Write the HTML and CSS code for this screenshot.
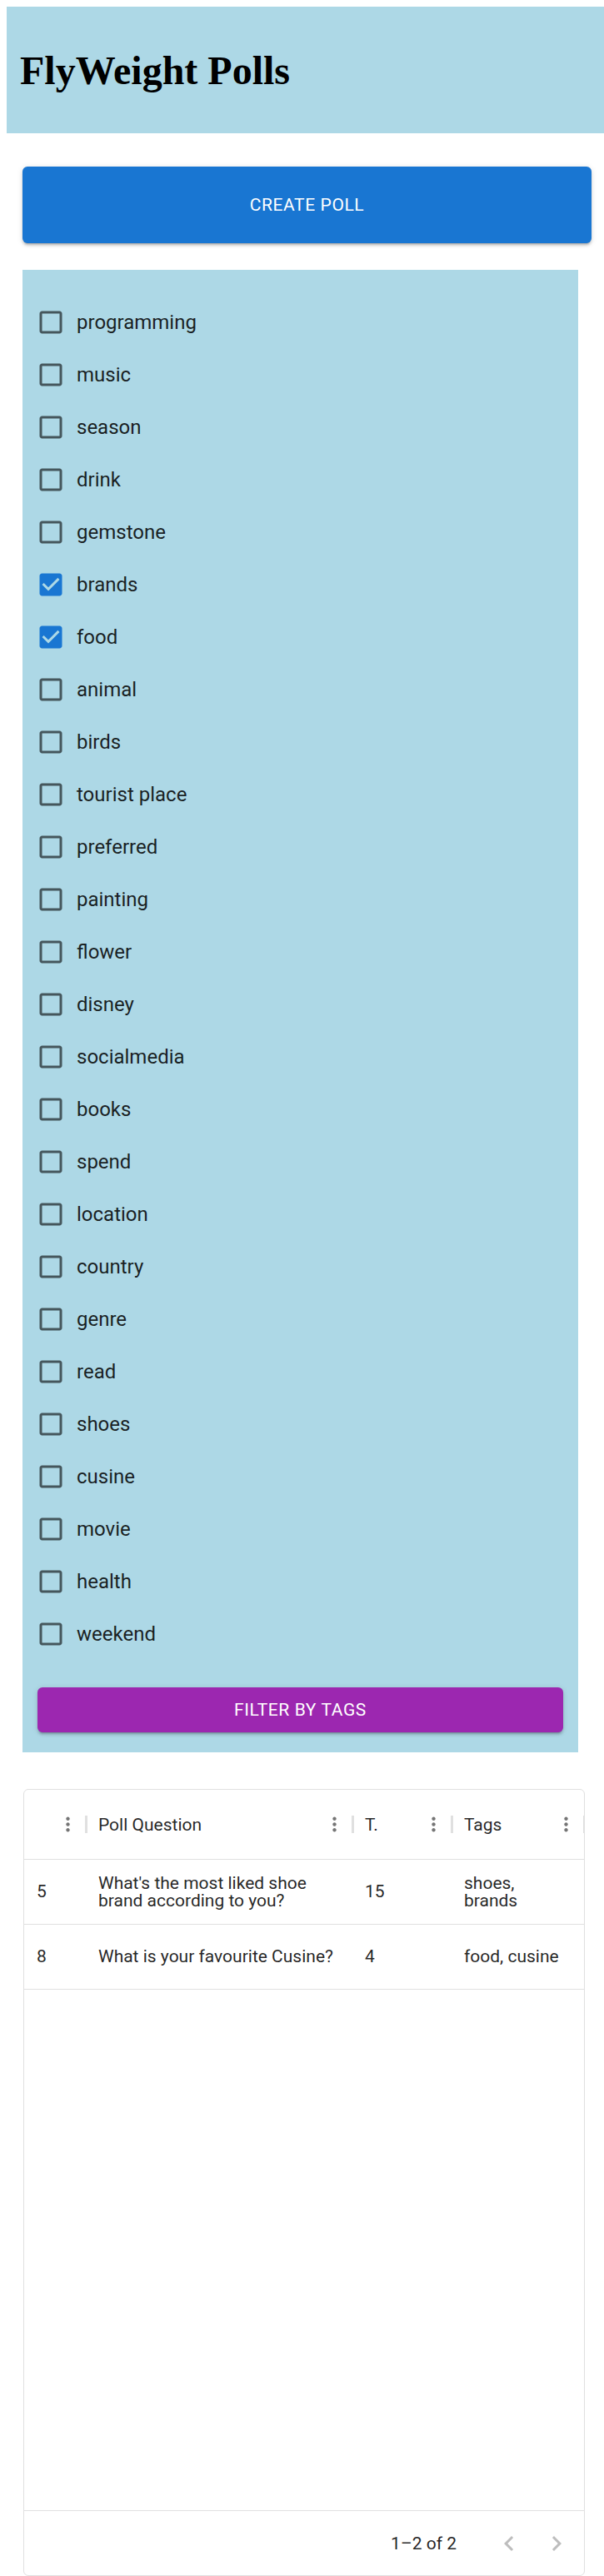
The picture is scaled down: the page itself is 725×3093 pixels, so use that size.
FILE: index.html
```html
<!DOCTYPE html>
<html lang="en">
<head>
<meta charset="utf-8">
<title>FlyWeight Polls</title>
<link rel="stylesheet" href="styles.css">
</head>
<body>
<header class="app-header"><h1 class="title">FlyWeight Polls</h1></header>
<main class="content">
  <button class="btn btn-create">Create Poll</button>
  <section class="tag-panel">
    <div class="tag-list">
      <label class="tag-row"><span class="cb"><svg viewBox="0 0 24 24"><path d="M19 5v14H5V5h14m0-2H5c-1.1 0-2 .9-2 2v14c0 1.1.9 2 2 2h14c1.1 0 2-.9 2-2V5c0-1.1-.9-2-2-2z"/></svg></span><span class="tag-label">programming</span></label>
      <label class="tag-row"><span class="cb"><svg viewBox="0 0 24 24"><path d="M19 5v14H5V5h14m0-2H5c-1.1 0-2 .9-2 2v14c0 1.1.9 2 2 2h14c1.1 0 2-.9 2-2V5c0-1.1-.9-2-2-2z"/></svg></span><span class="tag-label">music</span></label>
      <label class="tag-row"><span class="cb"><svg viewBox="0 0 24 24"><path d="M19 5v14H5V5h14m0-2H5c-1.1 0-2 .9-2 2v14c0 1.1.9 2 2 2h14c1.1 0 2-.9 2-2V5c0-1.1-.9-2-2-2z"/></svg></span><span class="tag-label">season</span></label>
      <label class="tag-row"><span class="cb"><svg viewBox="0 0 24 24"><path d="M19 5v14H5V5h14m0-2H5c-1.1 0-2 .9-2 2v14c0 1.1.9 2 2 2h14c1.1 0 2-.9 2-2V5c0-1.1-.9-2-2-2z"/></svg></span><span class="tag-label">drink</span></label>
      <label class="tag-row"><span class="cb"><svg viewBox="0 0 24 24"><path d="M19 5v14H5V5h14m0-2H5c-1.1 0-2 .9-2 2v14c0 1.1.9 2 2 2h14c1.1 0 2-.9 2-2V5c0-1.1-.9-2-2-2z"/></svg></span><span class="tag-label">gemstone</span></label>
      <label class="tag-row"><span class="cb cb-checked"><svg viewBox="0 0 24 24"><path d="M19 3H5c-1.11 0-2 .9-2 2v14c0 1.1.89 2 2 2h14c1.11 0 2-.9 2-2V5c0-1.1-.89-2-2-2zm-9 14l-5-5 1.41-1.41L10 14.17l7.59-7.59L19 8l-9 9z"/></svg></span><span class="tag-label">brands</span></label>
      <label class="tag-row"><span class="cb cb-checked"><svg viewBox="0 0 24 24"><path d="M19 3H5c-1.11 0-2 .9-2 2v14c0 1.1.89 2 2 2h14c1.11 0 2-.9 2-2V5c0-1.1-.89-2-2-2zm-9 14l-5-5 1.41-1.41L10 14.17l7.59-7.59L19 8l-9 9z"/></svg></span><span class="tag-label">food</span></label>
      <label class="tag-row"><span class="cb"><svg viewBox="0 0 24 24"><path d="M19 5v14H5V5h14m0-2H5c-1.1 0-2 .9-2 2v14c0 1.1.9 2 2 2h14c1.1 0 2-.9 2-2V5c0-1.1-.9-2-2-2z"/></svg></span><span class="tag-label">animal</span></label>
      <label class="tag-row"><span class="cb"><svg viewBox="0 0 24 24"><path d="M19 5v14H5V5h14m0-2H5c-1.1 0-2 .9-2 2v14c0 1.1.9 2 2 2h14c1.1 0 2-.9 2-2V5c0-1.1-.9-2-2-2z"/></svg></span><span class="tag-label">birds</span></label>
      <label class="tag-row"><span class="cb"><svg viewBox="0 0 24 24"><path d="M19 5v14H5V5h14m0-2H5c-1.1 0-2 .9-2 2v14c0 1.1.9 2 2 2h14c1.1 0 2-.9 2-2V5c0-1.1-.9-2-2-2z"/></svg></span><span class="tag-label">tourist place</span></label>
      <label class="tag-row"><span class="cb"><svg viewBox="0 0 24 24"><path d="M19 5v14H5V5h14m0-2H5c-1.1 0-2 .9-2 2v14c0 1.1.9 2 2 2h14c1.1 0 2-.9 2-2V5c0-1.1-.9-2-2-2z"/></svg></span><span class="tag-label">preferred</span></label>
      <label class="tag-row"><span class="cb"><svg viewBox="0 0 24 24"><path d="M19 5v14H5V5h14m0-2H5c-1.1 0-2 .9-2 2v14c0 1.1.9 2 2 2h14c1.1 0 2-.9 2-2V5c0-1.1-.9-2-2-2z"/></svg></span><span class="tag-label">painting</span></label>
      <label class="tag-row"><span class="cb"><svg viewBox="0 0 24 24"><path d="M19 5v14H5V5h14m0-2H5c-1.1 0-2 .9-2 2v14c0 1.1.9 2 2 2h14c1.1 0 2-.9 2-2V5c0-1.1-.9-2-2-2z"/></svg></span><span class="tag-label">flower</span></label>
      <label class="tag-row"><span class="cb"><svg viewBox="0 0 24 24"><path d="M19 5v14H5V5h14m0-2H5c-1.1 0-2 .9-2 2v14c0 1.1.9 2 2 2h14c1.1 0 2-.9 2-2V5c0-1.1-.9-2-2-2z"/></svg></span><span class="tag-label">disney</span></label>
      <label class="tag-row"><span class="cb"><svg viewBox="0 0 24 24"><path d="M19 5v14H5V5h14m0-2H5c-1.1 0-2 .9-2 2v14c0 1.1.9 2 2 2h14c1.1 0 2-.9 2-2V5c0-1.1-.9-2-2-2z"/></svg></span><span class="tag-label">socialmedia</span></label>
      <label class="tag-row"><span class="cb"><svg viewBox="0 0 24 24"><path d="M19 5v14H5V5h14m0-2H5c-1.1 0-2 .9-2 2v14c0 1.1.9 2 2 2h14c1.1 0 2-.9 2-2V5c0-1.1-.9-2-2-2z"/></svg></span><span class="tag-label">books</span></label>
      <label class="tag-row"><span class="cb"><svg viewBox="0 0 24 24"><path d="M19 5v14H5V5h14m0-2H5c-1.1 0-2 .9-2 2v14c0 1.1.9 2 2 2h14c1.1 0 2-.9 2-2V5c0-1.1-.9-2-2-2z"/></svg></span><span class="tag-label">spend</span></label>
      <label class="tag-row"><span class="cb"><svg viewBox="0 0 24 24"><path d="M19 5v14H5V5h14m0-2H5c-1.1 0-2 .9-2 2v14c0 1.1.9 2 2 2h14c1.1 0 2-.9 2-2V5c0-1.1-.9-2-2-2z"/></svg></span><span class="tag-label">location</span></label>
      <label class="tag-row"><span class="cb"><svg viewBox="0 0 24 24"><path d="M19 5v14H5V5h14m0-2H5c-1.1 0-2 .9-2 2v14c0 1.1.9 2 2 2h14c1.1 0 2-.9 2-2V5c0-1.1-.9-2-2-2z"/></svg></span><span class="tag-label">country</span></label>
      <label class="tag-row"><span class="cb"><svg viewBox="0 0 24 24"><path d="M19 5v14H5V5h14m0-2H5c-1.1 0-2 .9-2 2v14c0 1.1.9 2 2 2h14c1.1 0 2-.9 2-2V5c0-1.1-.9-2-2-2z"/></svg></span><span class="tag-label">genre</span></label>
      <label class="tag-row"><span class="cb"><svg viewBox="0 0 24 24"><path d="M19 5v14H5V5h14m0-2H5c-1.1 0-2 .9-2 2v14c0 1.1.9 2 2 2h14c1.1 0 2-.9 2-2V5c0-1.1-.9-2-2-2z"/></svg></span><span class="tag-label">read</span></label>
      <label class="tag-row"><span class="cb"><svg viewBox="0 0 24 24"><path d="M19 5v14H5V5h14m0-2H5c-1.1 0-2 .9-2 2v14c0 1.1.9 2 2 2h14c1.1 0 2-.9 2-2V5c0-1.1-.9-2-2-2z"/></svg></span><span class="tag-label">shoes</span></label>
      <label class="tag-row"><span class="cb"><svg viewBox="0 0 24 24"><path d="M19 5v14H5V5h14m0-2H5c-1.1 0-2 .9-2 2v14c0 1.1.9 2 2 2h14c1.1 0 2-.9 2-2V5c0-1.1-.9-2-2-2z"/></svg></span><span class="tag-label">cusine</span></label>
      <label class="tag-row"><span class="cb"><svg viewBox="0 0 24 24"><path d="M19 5v14H5V5h14m0-2H5c-1.1 0-2 .9-2 2v14c0 1.1.9 2 2 2h14c1.1 0 2-.9 2-2V5c0-1.1-.9-2-2-2z"/></svg></span><span class="tag-label">movie</span></label>
      <label class="tag-row"><span class="cb"><svg viewBox="0 0 24 24"><path d="M19 5v14H5V5h14m0-2H5c-1.1 0-2 .9-2 2v14c0 1.1.9 2 2 2h14c1.1 0 2-.9 2-2V5c0-1.1-.9-2-2-2z"/></svg></span><span class="tag-label">health</span></label>
      <label class="tag-row"><span class="cb"><svg viewBox="0 0 24 24"><path d="M19 5v14H5V5h14m0-2H5c-1.1 0-2 .9-2 2v14c0 1.1.9 2 2 2h14c1.1 0 2-.9 2-2V5c0-1.1-.9-2-2-2z"/></svg></span><span class="tag-label">weekend</span></label>
    </div>
    <button class="btn btn-filter">Filter by tags</button>
  </section>

  <section class="grid">
    <div class="grid-head">
      <div class="hcell"><span class="htitle"></span><svg class="dots" viewBox="0 0 24 24"><path d="M12 8c1.1 0 2-.9 2-2s-.9-2-2-2-2 .9-2 2 .9 2 2 2zm0 2c-1.1 0-2 .9-2 2s.9 2 2 2 2-.9 2-2-.9-2-2-2zm0 6c-1.1 0-2 .9-2 2s.9 2 2 2 2-.9 2-2-.9-2-2-2z"/></svg><span class="sep"></span></div>
      <div class="hcell"><span class="htitle">Poll Question</span><svg class="dots" viewBox="0 0 24 24"><path d="M12 8c1.1 0 2-.9 2-2s-.9-2-2-2-2 .9-2 2 .9 2 2 2zm0 2c-1.1 0-2 .9-2 2s.9 2 2 2 2-.9 2-2-.9-2-2-2zm0 6c-1.1 0-2 .9-2 2s.9 2 2 2 2-.9 2-2-.9-2-2-2z"/></svg><span class="sep"></span></div>
      <div class="hcell"><span class="htitle">T.</span><svg class="dots" viewBox="0 0 24 24"><path d="M12 8c1.1 0 2-.9 2-2s-.9-2-2-2-2 .9-2 2 .9 2 2 2zm0 2c-1.1 0-2 .9-2 2s.9 2 2 2 2-.9 2-2-.9-2-2-2zm0 6c-1.1 0-2 .9-2 2s.9 2 2 2 2-.9 2-2-.9-2-2-2z"/></svg><span class="sep"></span></div>
      <div class="hcell"><span class="htitle">Tags</span><svg class="dots" viewBox="0 0 24 24"><path d="M12 8c1.1 0 2-.9 2-2s-.9-2-2-2-2 .9-2 2 .9 2 2 2zm0 2c-1.1 0-2 .9-2 2s.9 2 2 2 2-.9 2-2-.9-2-2-2zm0 6c-1.1 0-2 .9-2 2s.9 2 2 2 2-.9 2-2-.9-2-2-2z"/></svg><span class="sep"></span></div>
    </div>
    <div class="grid-row">
      <div class="cell">5</div>
      <div class="cell">What's the most liked shoe brand according to you?</div>
      <div class="cell">15</div>
      <div class="cell">shoes, brands</div>
    </div>
    <div class="grid-row">
      <div class="cell">8</div>
      <div class="cell">What is your favourite Cusine?</div>
      <div class="cell">4</div>
      <div class="cell">food, cusine</div>
    </div>
    <div class="grid-body"></div>
    <div class="grid-foot">
      <span class="pager-text">1–2 of 2</span>
      <div class="pager-btns">
        <svg class="chev" viewBox="0 0 24 24"><path d="M15.41 16.59L10.83 12l4.58-4.59L14 6l-6 6 6 6 1.41-1.41z"/></svg>
        <svg class="chev" viewBox="0 0 24 24"><path d="M8.59 16.59L13.17 12 8.59 7.41 10 6l6 6-6 6-1.41-1.41z"/></svg>
      </div>
    </div>
  </section>
</main>
</body>
</html>
```

FILE: styles.css
```css
html, body {
  background: #ffffff;
}
body {
  margin: 8px 0 0 8px;
  font-family: Roboto, "Liberation Sans", Arial, sans-serif;
  color: rgba(0, 0, 0, 0.87);
}

.app-header {
  background: #add8e6;
  height: 152px;
  box-sizing: border-box;
  padding: 18px 16px 14px;
}
.title {
  margin: 32px 0;
  font-family: "Liberation Serif", "Times New Roman", serif;
  font-weight: bold;
  font-size: 48px;
  line-height: 53px;
  color: #000;
}

.content {
  padding-left: 19px;
  display: flex;
  flex-direction: column;
  align-items: flex-start;
}

.btn {
  border: none;
  border-radius: 6px;
  color: #fff;
  font-family: Roboto, "Liberation Sans", sans-serif;
  font-weight: 400;
  font-size: 21px;
  letter-spacing: 0.6px;
  text-transform: uppercase;
  box-shadow: 0 4px 2px -3px rgba(0,0,0,0.2), 0 3px 3px 0 rgba(0,0,0,0.14), 0 1px 7px 0 rgba(0,0,0,0.12);
  cursor: pointer;
  padding: 0;
}
.btn-create {
  margin-top: 40px;
  width: 683px;
  height: 92px;
  background: #1976d2;
}

.tag-panel {
  margin-top: 32px;
  width: 667px;
  box-sizing: border-box;
  background: #add8e6;
  padding: 31px 18px 24px;
  display: flex;
  flex-direction: column;
}
.tag-list {
  display: flex;
  flex-direction: column;
}
.tag-row {
  display: flex;
  align-items: center;
  height: 63px;
  margin-left: -16px;
  cursor: pointer;
}
.cb {
  display: flex;
  padding: 13.5px;
}
.cb svg {
  width: 36px;
  height: 36px;
  fill: rgba(0, 0, 0, 0.6);
}
.cb-checked svg {
  fill: #1976d2;
}
.tag-label {
  font-size: 24px;
  line-height: 36px;
  color: rgba(0, 0, 0, 0.87);
}
.btn-filter {
  margin-top: 33px;
  width: 100%;
  height: 54px;
  background: #9c27b0;
}

.grid {
  margin-top: 44px;
  margin-left: 1px;
  width: 674px;
  height: 945px;
  box-sizing: border-box;
  border: 1px solid #e0e0e0;
  border-radius: 6px;
  display: flex;
  flex-direction: column;
  overflow: hidden;
  font-size: 21px;
}
.grid-head,
.grid-row {
  display: grid;
  grid-template-columns: 74px 320px 119px 1fr;
  border-bottom: 1px solid #e0e0e0;
}
.grid-head {
  height: 84px;
  box-sizing: border-box;
}
.hcell {
  position: relative;
  display: flex;
  align-items: center;
  padding: 0 8.5px 0 15px;
  min-width: 0;
}
.htitle {
  flex: 1;
  white-space: nowrap;
  overflow: hidden;
}
.dots {
  width: 27px;
  height: 27px;
  fill: #757575;
  flex: none;
}
.sep {
  position: absolute;
  right: -1.5px;
  top: 50%;
  margin-top: -10.5px;
  width: 3px;
  height: 21px;
  background: #e0e0e0;
  z-index: 1;
}
.grid-row {
  height: 78px;
  box-sizing: border-box;
}
.cell {
  display: flex;
  align-items: center;
  padding: 0 15px;
  line-height: 21px;
  min-width: 0;
}
.grid-body {
  flex: 1;
}
.grid-foot {
  height: 78px;
  box-sizing: border-box;
  border-top: 1px solid #e0e0e0;
  display: flex;
  align-items: center;
  justify-content: flex-end;
  padding-right: 15px;
}
.pager-text {
  margin-right: 45px;
  font-size: 21px;
}
.pager-btns {
  display: flex;
  gap: 21px;
}
.chev {
  width: 36px;
  height: 36px;
  fill: rgba(0, 0, 0, 0.26);
}
```
